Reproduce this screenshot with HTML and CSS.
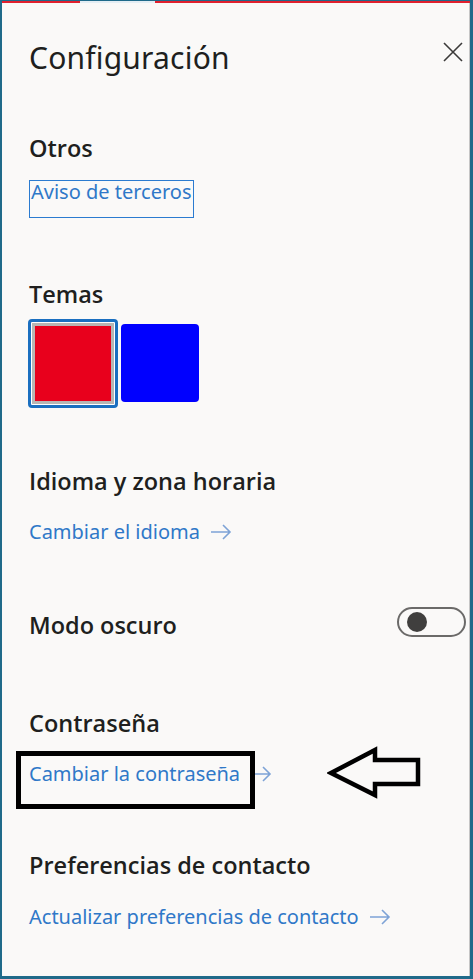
FILE: index.html
```html
<!DOCTYPE html>
<html lang="es">
<head>
<meta charset="utf-8">
<title>Configuración</title>
<link rel="stylesheet" href="styles.css">
</head>
<body>
<div class="panel">
  <div class="topbar"></div>
  <div class="content">
    <div class="header">
      <h1 class="title">Configuración</h1>
      <button class="close" aria-label="Cerrar">
        <svg width="20" height="20" viewBox="0 0 20 20"><path d="M1 1 L19 19 M19 1 L1 19" stroke="#3b3a39" stroke-width="1.6" fill="none"/></svg>
      </button>
    </div>

    <h2 class="heading h-otros">Otros</h2>
    <a class="focus-link">Aviso de terceros</a>

    <h2 class="heading h-temas">Temas</h2>
    <div class="swatches">
      <div class="swatch-selected"><div class="swatch red"></div></div>
      <div class="swatch blue"></div>
    </div>

    <h2 class="heading h-idioma">Idioma y zona horaria</h2>
    <a class="link l-idioma">Cambiar el idioma <svg class="arrow" width="22" height="16" viewBox="0 0 22 16"><path d="M1 8 H20 M13 1 L20 8 L13 15" stroke="#7ea3d6" stroke-width="1.6" fill="none"/></svg></a>

    <div class="toggle-row">
      <h2 class="heading h-modo">Modo oscuro</h2>
      <div class="toggle"><div class="knob"></div></div>
    </div>

    <h2 class="heading h-pass">Contraseña</h2>
    <div class="pass-row">
      <a class="link">Cambiar la contraseña <svg class="arrow" width="22" height="16" viewBox="0 0 22 16"><path d="M1 8 H20 M13 1 L20 8 L13 15" stroke="#7ea3d6" stroke-width="1.6" fill="none"/></svg></a>
      <div class="annot-box"></div>
      <svg class="annot-arrow" width="96" height="54" viewBox="0 0 96 54"><path d="M4 27 L48 4 L48 14 L91 14 L91 38 L48 38 L48 49 Z" stroke="#000" stroke-width="4.5" fill="none" stroke-linejoin="miter"/></svg>
    </div>

    <h2 class="heading h-pref">Preferencias de contacto</h2>
    <a class="link l-pref">Actualizar preferencias de contacto <svg class="arrow" width="22" height="16" viewBox="0 0 22 16"><path d="M1 8 H20 M13 1 L20 8 L13 15" stroke="#7ea3d6" stroke-width="1.6" fill="none"/></svg></a>
  </div>
</div>
</body>
</html>
```
FILE: styles.css
```css
html, body {
  margin: 0;
  padding: 0;
  background: #faf9f8;
}
body {
  font-family: "Noto Sans", "Open Sans", sans-serif;
  color: #201f1e;
}
.panel {
  box-sizing: border-box;
  width: 473px;
  height: 979px;
  border-top: 1px solid #1f6a8a;
  border-left: 2px solid #1f6a8a;
  border-right: 3px solid #1f6a8a;
  border-bottom: 3px solid #1f6a8a;
  background: #faf9f8;
  box-shadow: inset -1px 0 0 #c6c6c6;
  display: flex;
  flex-direction: column;
}
.topbar {
  height: 2px;
  background: linear-gradient(to right, #e0202e 0, #e0202e 78px, #e4eef4 78px, #e4eef4 153px, #e0202e 153px);
}
.content {
  padding: 0 4px 0 27px;
  display: flex;
  flex-direction: column;
  align-items: flex-start;
  position: relative;
}
.header {
  align-self: stretch;
  display: flex;
  justify-content: space-between;
  align-items: flex-start;
  margin-top: 35px;
}
.title {
  margin: 0;
  font-size: 30px;
  font-weight: 400;
  line-height: 40px;
  height: 40px;
  letter-spacing: 0.2px;
}
.close {
  margin: 4px 3px 0 0;
  padding: 0;
  border: 0;
  background: none;
  width: 20px;
  height: 20px;
  display: block;
}
.close svg { display: block; }
.heading {
  margin: 0;
  font-family: "Open Sans", "Noto Sans", sans-serif;
  font-size: 23.5px;
  font-weight: 600;
  line-height: 30px;
  height: 30px;
  white-space: nowrap;
}
.h-otros { margin-top: 55px; }
.focus-link {
  margin-top: 17px;
  box-sizing: border-box;
  height: 38px;
  border: 1px solid #2b7bd0;
  padding: 0 1px 14px 1px;
  font-size: 20px;
  line-height: 22px;
  color: #2f78c8;
}
.h-temas { margin-top: 61px; }
.swatches {
  margin-top: 10px;
  margin-left: -1px;
  display: flex;
  gap: 3px;
  align-items: flex-start;
}
.swatch-selected {
  box-sizing: border-box;
  width: 90px;
  height: 89px;
  border: 3px solid #1a6fc0;
  border-radius: 4px;
  padding: 1px;
  background: #fff;
}
.swatch.red {
  box-sizing: border-box;
  width: 100%;
  height: 100%;
  background: #e8001c;
  border: 3px solid #b8b6b4;
}
.swatch.blue {
  margin-top: 5px;
  width: 78px;
  height: 78px;
  background: #0000ff;
  border-radius: 4px;
}
.h-idioma { margin-top: 58px; }
.link {
  display: inline-flex;
  align-items: center;
  font-size: 20px;
  line-height: 28px;
  height: 28px;
  color: #2f78c8;
  white-space: nowrap;
}
.arrow {
  margin-left: 10px;
  display: block;
}
.l-idioma { margin-top: 22px; }
.toggle-row {
  margin-top: 59px;
  align-self: stretch;
  display: flex;
  justify-content: space-between;
  align-items: flex-start;
}
.h-modo { margin-top: 5px; }
.toggle {
  margin-top: 2px;
  box-sizing: border-box;
  width: 69px;
  height: 30px;
  border: 2px solid #6b6a69;
  border-radius: 15px;
  display: flex;
  align-items: center;
  padding-left: 8px;
}
.knob {
  width: 20px;
  height: 20px;
  border-radius: 50%;
  background: #403f3e;
}
.h-pass { margin-top: 68px; }
.pass-row {
  margin-top: 22px;
  position: relative;
}
.annot-box {
  position: absolute;
  left: -13px;
  top: -9px;
  width: 239px;
  height: 58px;
  box-sizing: border-box;
  border: 5px solid #000;
}
.annot-arrow {
  position: absolute;
  left: 298px;
  top: -14px;
}
.h-pref { margin-top: 62px; }
.l-pref { margin-top: 23px; }
```
